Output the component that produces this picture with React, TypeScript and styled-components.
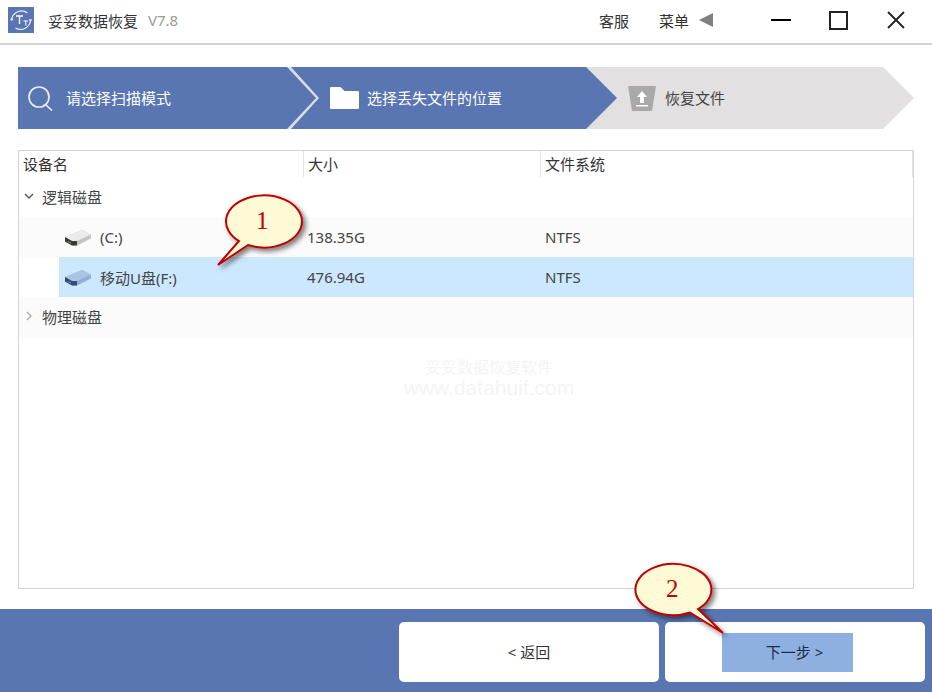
import React from 'react';
import styled, { createGlobalStyle } from 'styled-components';

const BLUE = '#5976b2';
const FONT = '"Noto Sans", "Noto Sans CJK SC", sans-serif';

const GlobalStyle = createGlobalStyle`
    html, body {
        margin: 0;
        background: #fff;
    }
    body {
        font-family: ${FONT};
        font-size: 15px;
        color: #333;
    }
`;

const Page = styled.div`
    position: relative;
    width: 932px;
    height: 692px;
    overflow: hidden;
    display: flex;
    flex-direction: column;
`;

const TitleBar = styled.header`
    height: 40px;
    flex: none;
    border-bottom: 2px solid #d4d4d4;
    display: flex;
    align-items: center;
    padding: 0 27px 3px 8px;
`;

const AppName = styled.span`
    margin-left: 14px;
    color: #333;
`;

const Version = styled.span`
    margin-left: 10px;
    color: #9a9a9a;
`;

const MenuLink = styled.span<{ $left: number }>`
    margin-left: ${(p) => p.$left}px;
    color: #333;
`;

const WindowButton = styled.span<{ $left: number }>`
    margin-left: ${(p) => p.$left}px;
    display: flex;
    align-items: center;
    justify-content: center;
    svg {
        display: block;
    }
`;

const Spacer = styled.div`
    flex: 1;
`;

const StepBar = styled.div`
    display: flex;
    height: 62px;
    margin: 22px 0 0 18px;
    flex: none;
`;

const Step = styled.div<{ $width: number; $overlap: number; $tail: number; $done: boolean; $z: number }>`
    position: relative;
    z-index: ${(p) => p.$z};
    width: ${(p) => p.$width}px;
    margin-left: -${(p) => p.$overlap}px;
    padding-left: ${(p) => p.$overlap}px;
    box-sizing: border-box;
    height: 62px;
    display: flex;
    align-items: center;
    background: ${(p) => (p.$done ? BLUE : '#e2e0e1')};
    color: ${(p) => (p.$done ? '#fff' : '#444')};
    clip-path: polygon(
        0 0,
        calc(100% - ${(p) => p.$tail}px) 0,
        100% 50%,
        calc(100% - ${(p) => p.$tail}px) 100%,
        0 100%
    );
`;

const FirstStep = styled(Step)`
    background: #d9dde8;
    &::before {
        content: '';
        position: absolute;
        inset: 0;
        background: ${BLUE};
        clip-path: polygon(0 0, 269px 0, 298px 31px, 269px 62px, 0 62px);
    }
`;

const StepContent = styled.div<{ $left: number; $gap: number }>`
    position: relative;
    display: flex;
    align-items: center;
    margin-left: ${(p) => p.$left}px;
    gap: ${(p) => p.$gap}px;
    svg {
        display: block;
        flex: none;
    }
`;

const StepLabel = styled.span`
    position: relative;
    top: -1px;
`;

const Panel = styled.section`
    position: relative;
    flex: none;
    height: 437px;
    margin: 21px 18px 20px;
    border: 1px solid #d4d4d4;
    background: #fff;
`;

const HeaderRow = styled.div`
    display: grid;
    grid-template-columns: 285px 237px 1fr;
    height: 26px;
`;

const HeaderCell = styled.div`
    display: flex;
    align-items: center;
    padding: 0 0 2px 4px;
    border-right: 1px solid #e4e4e4;
    color: #333;
`;

const GroupRow = styled.div<{ $shaded?: boolean }>`
    height: 38px;
    padding-bottom: 2px;
    display: flex;
    align-items: center;
    background: ${(p) => (p.$shaded ? '#fbfbfb' : '#fff')};
    color: #444;
    svg {
        margin: 0 8px 0 5px;
        display: block;
        flex: none;
    }
`;

const DeviceRow = styled.div<{ $selected?: boolean }>`
    display: grid;
    grid-template-columns: 244px 238px 1fr;
    height: 40px;
    margin-left: ${(p) => (p.$selected ? 40 : 0)}px;
    padding-left: ${(p) => (p.$selected ? 0 : 40)}px;
    background: ${(p) => (p.$selected ? '#cce8ff' : '#fbfbfb')};
    align-items: center;
    color: #444;
`;

const NameCell = styled.div`
    display: flex;
    align-items: center;
    gap: 8px;
    padding-left: 5px;
    svg {
        display: block;
        flex: none;
    }
`;

const ValueCell = styled.div`
    padding-left: 4px;
`;

const Watermark = styled.div`
    position: absolute;
    left: 369px;
    top: 205px;
    width: 202px;
    text-align: center;
    color: #f4f4f4;
    white-space: nowrap;
`;

const WatermarkTitle = styled.div`
    font-size: 16px;
    line-height: 22px;
`;

const WatermarkUrl = styled.div`
    font-family: 'Liberation Sans', sans-serif;
    font-size: 21px;
    line-height: 20px;
`;

const Footer = styled.footer`
    flex: 1;
    background: ${BLUE};
    display: flex;
    justify-content: flex-end;
    gap: 6px;
    padding: 13px 7px 10px 0;
`;

const FooterCard = styled.div`
    width: 260px;
    background: #fff;
    border-radius: 5px;
    display: flex;
    align-items: center;
    justify-content: center;
    color: #333;
`;

const BackLabel = styled.span`
    position: relative;
    top: -1px;
`;

const NextButton = styled.button`
    width: 131px;
    height: 39px;
    margin-right: 15px;
    border: 0;
    padding: 0 0 2px 14px;
    background: #8db0e0;
    color: #1c2b45;
    font: inherit;
`;

const Callout = styled.div<{ $left: number; $top: number }>`
    position: absolute;
    left: ${(p) => p.$left}px;
    top: ${(p) => p.$top}px;
    z-index: 5;
    svg {
        display: block;
        overflow: visible;
    }
`;

const CalloutDigit = styled.span<{ $left: number; $top: number }>`
    position: absolute;
    left: ${(p) => p.$left}px;
    top: ${(p) => p.$top}px;
    font-family: 'Liberation Serif', serif;
    font-size: 25px;
    line-height: 28px;
    color: #c00000;
`;

function Logo() {
    return (
        <svg width='26' height='26' viewBox='0 0 26 26'>
            <rect width='26' height='26' fill='#5976b2' />
            <path d='M3.500 13.500a10 10 0 0 1 16-7.500' fill='none' stroke='#e8ecf5' strokeWidth='1.200' />
            <path d='M22.500 13a10 10 0 0 1-15 8' fill='none' stroke='#e8ecf5' strokeWidth='1.200' />
            <path d='M2 13l2-2.500 1.500 3zM24.400 12.500l-2 2.500-1.600-3z' fill='#e8ecf5' />
            <path d='M8 9h7M11.500 9v8' fill='none' stroke='#fff' strokeWidth='1.300' />
            <path d='M15.500 14h4.500M17.800 14v4.500' fill='none' stroke='#fff' strokeWidth='1' />
        </svg>
    );
}

function DriveIcon({ selected }: { selected?: boolean }) {
    const top = selected ? '#a9c5e4' : '#ececec';
    const edge = selected ? '#8fb0d6' : '#c4c4c4';
    const front = selected ? '#2f4f78' : '#3a3a3a';
    return (
        <svg width='28' height='17' viewBox='0 0 28 17'>
            <path d='M1 8L18 1l9 4.500v4L13 16.500H8L1 12.500z' fill={edge} />
            <path d='M1 8L18 1l9 4.500-14 6.500H8z' fill={top} />
            <path d='M1 8l7 4h5v4.500H8L1 12.500z' fill={front} />
            <path d='M4 12.500l3 1.500' stroke={selected ? '#6d93c0' : '#5fae5f'} strokeWidth='1' />
        </svg>
    );
}

function ChevronDown() {
    return (
        <svg width='10' height='10' viewBox='0 0 10 10'>
            <path d='M1 3l4 4 4-4' fill='none' stroke='#555' strokeWidth='1.400' />
        </svg>
    );
}

function ChevronRight() {
    return (
        <svg width='10' height='10' viewBox='0 0 10 10'>
            <path d='M3 1l4 4-4 4' fill='none' stroke='#aaa' strokeWidth='1.400' />
        </svg>
    );
}

function BubbleOne() {
    return (
        <Callout $left={217} $top={194}>
            <svg width='88' height='74' viewBox='0 0 88 74'>
                <defs>
                    <filter id='bubbleShadow' x='-20%' y='-20%' width='150%' height='150%'>
                        <feDropShadow dx='3' dy='3' stdDeviation='2.500' floodColor='#000' floodOpacity='0.5' />
                    </filter>
                </defs>
                <path
                    d='M22 47L1 71L31 51A38 26 0 1 0 22 47Z'
                    fill='#fffad6'
                    stroke='#c00000'
                    strokeWidth='2'
                    filter='url(#bubbleShadow)'
                />
            </svg>
            <CalloutDigit $left={39} $top={13}>1</CalloutDigit>
        </Callout>
    );
}

function BubbleTwo() {
    return (
        <Callout $left={634} $top={561}>
            <svg width='92' height='74' viewBox='0 0 92 74'>
                <path
                    d='M64 48L89 72L56 51.500A38 25.500 0 1 1 64 48Z'
                    fill='#fffad6'
                    stroke='#c00000'
                    strokeWidth='2'
                    filter='url(#bubbleShadow)'
                />
            </svg>
            <CalloutDigit $left={32} $top={14}>2</CalloutDigit>
        </Callout>
    );
}

export default function App() {
    return (
        <Page>
            <GlobalStyle />
            <TitleBar>
                <Logo />
                <AppName>妥妥数据恢复</AppName>
                <Version>V7.8</Version>
                <Spacer />
                <MenuLink $left={0}>客服</MenuLink>
                <MenuLink $left={30}>菜单</MenuLink>
                <WindowButton $left={10}>
                    <svg width='14' height='14' viewBox='0 0 14 14'>
                        <path d='M14 0v14L0 7z' fill='#808080' />
                    </svg>
                </WindowButton>
                <WindowButton $left={58}>
                    <svg width='20' height='2' viewBox='0 0 20 2'>
                        <rect width='20' height='2' fill='#000' />
                    </svg>
                </WindowButton>
                <WindowButton $left={38}>
                    <svg width='19' height='19' viewBox='0 0 19 19'>
                        <rect x='1' y='1' width='17' height='17' fill='none' stroke='#222' strokeWidth='2' />
                    </svg>
                </WindowButton>
                <WindowButton $left={39}>
                    <svg width='18' height='18' viewBox='0 0 18 18'>
                        <path d='M1 1l16 16M17 1L1 17' fill='none' stroke='#222' strokeWidth='1.800' />
                    </svg>
                </WindowButton>
            </TitleBar>

            <StepBar>
                <FirstStep $width={301} $overlap={0} $tail={28} $done $z={3}>
                    <StepContent $left={9} $gap={13}>
                        <svg width='26' height='26' viewBox='0 0 26 26'>
                            <circle cx='12' cy='12' r='10' fill='none' stroke='#e9edf6' strokeWidth='1.700' />
                            <path d='M18.500 19.500L25 25.500' stroke='#e9edf6' strokeWidth='1.700' />
                        </svg>
                        <StepLabel>请选择扫描模式</StepLabel>
                    </StepContent>
                </FirstStep>
                <Step $width={330} $overlap={32} $tail={31} $done $z={2}>
                    <StepContent $left={11} $gap={8}>
                        <svg width='29' height='22' viewBox='0 0 29 22'>
                            <path
                                d='M1 0h9.500l4 4H28a1 1 0 0 1 1 1v16a1 1 0 0 1-1 1H1a1 1 0 0 1-1-1V1a1 1 0 0 1 1-1z'
                                fill='#fff'
                            />
                        </svg>
                        <StepLabel>选择丢失文件的位置</StepLabel>
                    </StepContent>
                </Step>
                <Step $width={328} $overlap={31} $tail={31} $done={false} $z={1}>
                    <StepContent $left={11} $gap={9}>
                        <svg width='28' height='25' viewBox='0 0 28 25'>
                            <path d='M0 0h28l-4 25H4z' fill='#a9a9a9' />
                            <path d='M14 5l5 6h-3v6h-4v-6H9z' fill='#fff' />
                            <rect x='8' y='19' width='12' height='1.500' fill='#fff' />
                        </svg>
                        <StepLabel>恢复文件</StepLabel>
                    </StepContent>
                </Step>
            </StepBar>

            <Panel>
                <HeaderRow>
                    <HeaderCell>设备名</HeaderCell>
                    <HeaderCell>大小</HeaderCell>
                    <HeaderCell>文件系统</HeaderCell>
                </HeaderRow>
                <GroupRow>
                    <ChevronDown />
                    逻辑磁盘
                </GroupRow>
                <DeviceRow>
                    <NameCell>
                        <DriveIcon />
                        (C:)
                    </NameCell>
                    <ValueCell>138.35G</ValueCell>
                    <ValueCell>NTFS</ValueCell>
                </DeviceRow>
                <DeviceRow $selected>
                    <NameCell>
                        <DriveIcon selected />
                        移动U盘(F:)
                    </NameCell>
                    <ValueCell>476.94G</ValueCell>
                    <ValueCell>NTFS</ValueCell>
                </DeviceRow>
                <GroupRow $shaded>
                    <ChevronRight />
                    物理磁盘
                </GroupRow>
                <Watermark>
                    <WatermarkTitle>妥妥数据恢复软件</WatermarkTitle>
                    <WatermarkUrl>www.datahuif.com</WatermarkUrl>
                </Watermark>
            </Panel>

            <Footer>
                <FooterCard>
                    <BackLabel>&lt; 返回</BackLabel>
                </FooterCard>
                <FooterCard>
                    <NextButton>下一步 &gt;</NextButton>
                </FooterCard>
            </Footer>

            <BubbleOne />
            <BubbleTwo />
        </Page>
    );
}
